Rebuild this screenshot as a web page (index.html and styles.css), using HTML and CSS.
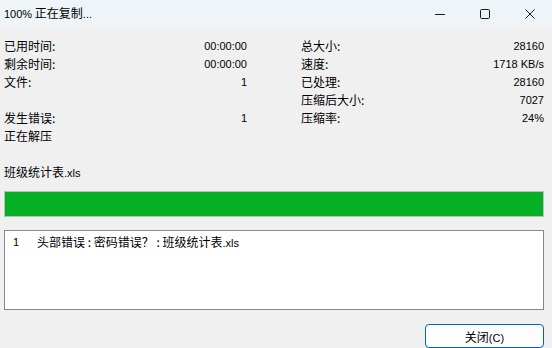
FILE: index.html
```html
<!DOCTYPE html>
<html lang="zh-CN">
<head>
  <meta charset="UTF-8">
  <title>100% 正在复制...</title>
  <link rel="stylesheet" href="styles.css">
</head>
<body>
  <div class="window">
    <div class="titlebar">
      <span class="title"><span class="en">100%</span> 正在复制<span class="en">...</span></span>
      <div class="controls">
        <span class="ctl">
          <svg width="10" height="10" viewBox="0 0 10 10"><path d="M0 5.5h10" stroke="#1a1a1a" stroke-width="1"/></svg>
        </span>
        <span class="ctl">
          <svg width="10" height="10" viewBox="0 0 10 10"><rect x="0.5" y="0.5" width="9" height="9" rx="1.2" fill="none" stroke="#1a1a1a" stroke-width="1"/></svg>
        </span>
        <span class="ctl">
          <svg width="10" height="10" viewBox="0 0 10 10"><path d="M0.5 0.5l9 9M9.5 0.5l-9 9" stroke="#1a1a1a" stroke-width="1"/></svg>
        </span>
      </div>
    </div>

    <div class="content">
      <div class="stats">
        <div class="col">
          <div class="row"><span>已用时间:</span><span class="en">00:00:00</span></div>
          <div class="row"><span>剩余时间:</span><span class="en">00:00:00</span></div>
          <div class="row"><span>文件:</span><span class="en">1</span></div>
          <div class="row"></div>
          <div class="row"><span>发生错误:</span><span class="en">1</span></div>
          <div class="row"><span>正在解压</span></div>
        </div>
        <div class="col">
          <div class="row"><span>总大小:</span><span class="en">28160</span></div>
          <div class="row"><span>速度:</span><span class="en">1718 KB/s</span></div>
          <div class="row"><span>已处理:</span><span class="en">28160</span></div>
          <div class="row"><span>压缩后大小:</span><span class="en">7027</span></div>
          <div class="row"><span>压缩率:</span><span class="en">24%</span></div>
        </div>
      </div>

      <div class="filename">班级统计表<span class="en">.xls</span></div>

      <div class="progress"><div class="bar" style="width: 100%"></div></div>

      <div class="log">
        <div class="log-row"><span class="num en">1</span><span>头部错误 : 密码错误？ : 班级统计表<span class="en">.xls</span></span></div>
      </div>

      <div class="footer">
        <button class="btn">关闭<span class="en">(C)</span></button>
      </div>
    </div>
  </div>
</body>
</html>
```
FILE: styles.css
```css
body {
  margin: 0;
  font-family: "Noto Sans CJK SC", "Noto Sans", sans-serif;
  font-size: 12px;
  color: #000;
  background-color: #f0f0f0;
}
.en {
  font-family: "Liberation Sans", Arial, sans-serif;
  font-size: 11px;
}
.window {
  width: 552px;
  height: 348px;
  display: flex;
  flex-direction: column;
}
.titlebar {
  height: 27px;
  background: #eef4f7; /* light title bar */
  display: flex;
  align-items: center;
  justify-content: space-between;
  padding-left: 4px;
}
.title {
  line-height: 18px;
}
.controls {
  display: flex;
  height: 27px;
}
.ctl {
  width: 45px;
  display: flex;
  align-items: center;
  justify-content: center;
}
.content {
  padding: 10px 8px 0 4px;
}
.stats {
  display: grid;
  grid-template-columns: 243px 243px;
  column-gap: 54px;
}
.row {
  height: 18px;
  line-height: 18px;
  display: flex;
  justify-content: space-between;
}
.filename {
  margin-top: 18px;
  line-height: 18px;
}
.progress {
  margin-top: 9px;
  height: 24px;
  border: 1px solid #bcbcbc;
  background: #e6e6e6;
}
.bar {
  height: 100%;
  background: #06b025; /* green fill */
}
.log {
  margin-top: 13px;
  height: 76px;
  border: 1px solid #828790;
  background: #fff;
  padding: 2px 0 0 8px;
  box-sizing: content-box;
}
.log-row {
  line-height: 18px;
  display: flex;
}
.num {
  width: 24px;
}
.footer {
  display: flex;
  justify-content: flex-end;
  margin-top: 14px;
}
.btn {
  width: 119px;
  height: 24px;
  border: 1px solid #0067c0;
  border-radius: 4px;
  background: #fdfdfd;
  font-family: "Noto Sans CJK SC", "Noto Sans", sans-serif;
  font-size: 12px;
  color: #000;
  padding: 0;
}
```
